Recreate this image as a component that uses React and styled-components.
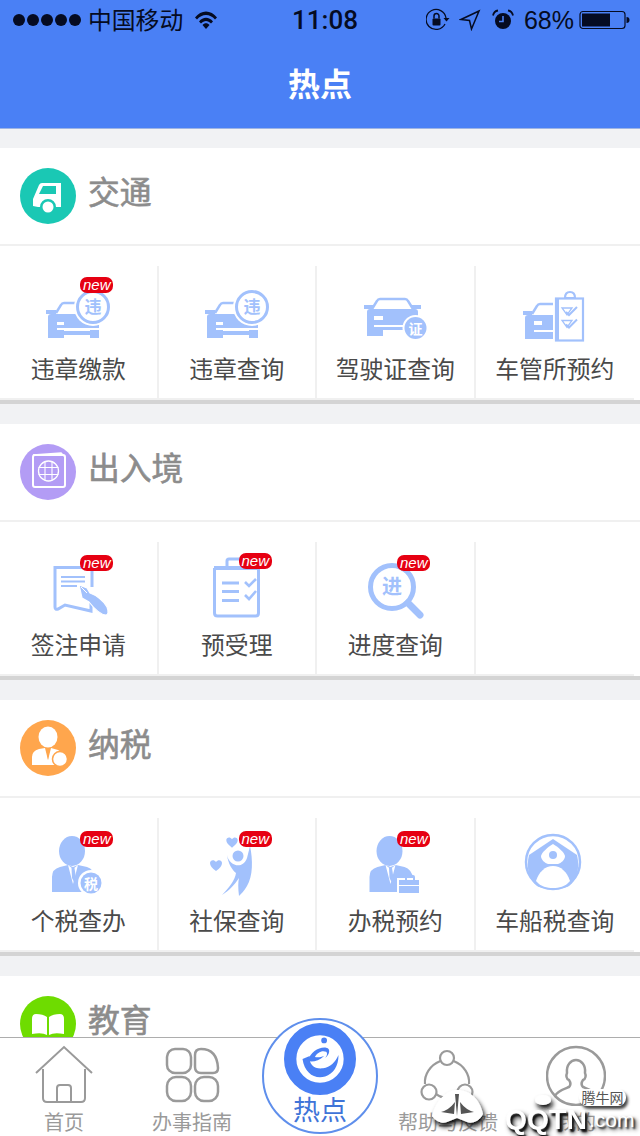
import React from "react";
import styled, { createGlobalStyle } from "styled-components";

const BLUE = "#a2c1fc";
const CJK = `"Noto Sans CJK SC", "Noto Sans", sans-serif`;

const Global = createGlobalStyle`
  html, body { margin: 0; padding: 0; background: #f1f2f4; }
  * { box-sizing: border-box; }
`;

const Page = styled.div`
  width: 640px; height: 1136px; display: flex; flex-direction: column;
  overflow: hidden; position: relative; background: #f1f2f4; font-family: ${CJK};
`;
const Header = styled.header`
  height: 129px; flex: none; background: #4a80f5; border-bottom: 1px solid #9db4e4;
`;
const StatusBar = styled.div`
  height: 40px; display: flex; align-items: center; justify-content: space-between;
  padding: 0 10px 0 13px; color: #050b22; position: relative;
`;
const StatusGroup = styled.div`
  display: flex; align-items: center;
`;
const Dots = styled.div`
  display: flex; gap: 2px; margin-right: 7px;
`;
const Dot = styled.span`
  width: 12px; height: 12px; border-radius: 50%; background: #050b22;
`;
const Carrier = styled.span`
  font-size: 23.8px; line-height: 38px; margin-right: 11px; padding-bottom: 2px;
`;
const Clock = styled.span`
  position: absolute; left: 292px; top: 0;
  font: 500 26px/40px Roboto, "Liberation Sans", sans-serif;
`;
const StatusIcon = styled.svg`
  display: block; flex: none; margin-left: ${(p) => p.$gap || 0}px;
`;
const Percent = styled.span`
  font: 400 25px/40px "Liberation Sans", sans-serif; margin: 0 5px 0 10px;
`;
const TitleBar = styled.h1`
  margin: 0; height: 88px; display: flex; align-items: center; justify-content: center;
  color: #fff; font-size: 32px; font-weight: 700; padding-bottom: 4px;
`;
const Content = styled.main`
  flex: 1; min-height: 0; overflow: hidden; display: flex; flex-direction: column;
  gap: 20px; padding-top: 19px;
`;
const Section = styled.section`
  flex: none; background: #fff; border-bottom: 4px solid #d4d4d4;
`;
const SectionHead = styled.div`
  height: 98px; display: flex; align-items: center; gap: 12px;
  padding: 0 20px; border-bottom: 2px solid #f0f0f0;
`;
const Badge = styled.div`
  width: 56px; height: 56px; border-radius: 50%; background: ${(p) => p.$color};
  flex: none;
  svg { display: block; }
`;
const SectionTitle = styled.h2`
  margin: 0 0 12px; font-size: 31.8px; font-weight: 400; color: #8c8c8c; line-height: 44px;
  -webkit-text-stroke: 0.6px #8c8c8c;
`;
const Grid = styled.div`
  width: 634px; margin-top: 20px; display: grid; grid-template-columns: repeat(4, 158.5px);
  border-bottom: 2px solid #f0f0f0;
`;
const Cell = styled.div`
  height: 132px; border-right: ${(p) => (p.$last ? "none" : "2px solid #f0f0f0")};
  display: flex; flex-direction: column; align-items: center; padding-top: 10px;
`;
const IconWrap = styled.div`
  position: relative; width: 80px; height: 64px; flex: none;
  svg { display: block; overflow: visible; }
`;
const NewTag = styled.span`
  position: absolute; left: 42px; top: ${(p) => p.$top}px; width: 33px; height: 16px;
  border-radius: 7px; background: #e60012; color: #fff; text-align: center;
  font: italic 400 15px/15px "Liberation Sans", sans-serif;
`;
const CellLabel = styled.div`
  margin-top: 11px; font-size: 23.8px; line-height: 34px; color: #4a4a4a; white-space: nowrap;
  font-weight: 400;
`;
const TabBar = styled.nav`
  flex: none; height: 99px; background: #fff; border-top: 1px solid #adadad;
  display: grid; grid-template-columns: repeat(5, 128px); position: relative;
`;
const Tab = styled.div`
  display: flex; flex-direction: column; align-items: center; padding-top: 6px;
  svg { display: block; flex: none; }
`;
const TabLabel = styled.span`
  font-size: 20px; line-height: 26px; color: #9a9a9a; margin-top: 3px; white-space: nowrap;
`;
const HotCircle = styled.div`
  position: absolute; left: 262px; top: -20px; width: 116px; height: 116px; border-radius: 50%;
  background: #fff; border: 2px solid #5f8fec; display: flex; flex-direction: column;
  align-items: center; padding-top: 3px;
  svg { display: block; flex: none; }
`;
const HotLabel = styled.span`
  font-size: 27px; line-height: 34px; color: #3f74d8; margin-top: -3px;
`;
const Watermark = styled.div`
  position: absolute; left: 428px; top: 48px; width: 212px; height: 51px;
  svg { position: absolute; left: 0; top: 0; overflow: visible; }
`;
const WmBrand = styled.span`
  position: absolute; left: 77px; top: 20px; color: #fff;
  font: 700 27px/28px "Liberation Sans", sans-serif; transform: scaleX(1.05); transform-origin: left;
  text-shadow: 2px 3px 2px #111, 3px 4px 5px #333;
`;
const WmCom = styled.span`
  position: absolute; left: 161px; top: 21px; color: #fff;
  font: 400 21px/26px "Liberation Sans", sans-serif; text-shadow: 2px 2px 2px #222, 3px 3px 4px #444;
`;
const WmPill = styled.span`
  position: absolute; left: 151px; top: 3px; width: 47px; height: 17px; border-radius: 8px;
  background: #fff; color: #555; font-size: 14px; line-height: 17px; text-align: center;
  box-shadow: 2px 3px 3px #444;
`;

const CarHalf = () => (
  <g>
    <rect x="8" y="34" width="10" height="4" fill={BLUE} />
    <path d="M18 37l5-8q1-2 3-2h20" fill="#fff" stroke={BLUE} strokeWidth="2.5" />
    <path d="M10 41q0-3 3-3h48v14H26v3h26v-1h9v8h-9v-3H26v3H10z" fill={BLUE} />
    <rect x="19" y="46" width="7" height="3" fill="#fff" />
    <rect x="19" y="52" width="33" height="2" fill="#fff" />
  </g>
);
const TextIn = ({ x, y, size, fill = BLUE, weight = 500, children }) => (
  <text x={x} y={y} fontSize={size} fontWeight={weight} textAnchor="middle" fill={fill} fontFamily={CJK}>
    {children}
  </text>
);
const Svg = ({ children }) => <svg width="80" height="64" viewBox="0 0 80 64">{children}</svg>;

const IconViolation = () => (
  <Svg>
    <CarHalf />
    <circle cx="55" cy="31" r="19" fill="#fff" />
    <circle cx="55" cy="31" r="15.5" fill="#fff" stroke={BLUE} strokeWidth="3" />
    <TextIn x="55" y="37" size="17" weight="700">违</TextIn>
  </Svg>
);
const IconLicense = () => (
  <Svg>
    <rect x="9" y="29" width="10" height="4" fill={BLUE} />
    <rect x="56" y="29" width="10" height="4" fill={BLUE} />
    <path d="M17 33l5-8q1-2 3-2h25q2 0 3 2l5 8" fill="#fff" stroke={BLUE} strokeWidth="2.5" />
    <path d="M12 36q0-3 3-3h45q3 0 3 3v24h-9v-6H28v6H12z" fill={BLUE} />
    <rect x="19" y="40" width="9" height="4" fill="#fff" />
    <rect x="19" y="49" width="38" height="2" fill="#fff" />
    <circle cx="60.5" cy="52" r="13" fill="#fff" />
    <circle cx="60.5" cy="52" r="11" fill={BLUE} />
    <TextIn x="60.5" y="57.5" size="14" fill="#fff" weight="700">证</TextIn>
  </Svg>
);
const IconDmv = () => (
  <Svg>
    <rect x="8" y="35" width="9" height="4" fill={BLUE} />
    <path d="M17 38l5-8q1-2 3-2h13" fill="#fff" stroke={BLUE} strokeWidth="2.5" />
    <path d="M10 42q0-3 3-3h25v24H10z" fill={BLUE} />
    <rect x="19" y="45" width="8" height="4" fill="#fff" />
    <rect x="19" y="54" width="19" height="2" fill="#fff" />
    <path d="M50 22q0-6 5-6t5 6z" fill="#fff" stroke={BLUE} strokeWidth="2.2" />
    <rect x="41" y="22.5" width="27" height="42" fill="#fff" stroke={BLUE} strokeWidth="2.2" />
    <rect x="40" y="22" width="4" height="43" fill={BLUE} />
    <path d="M47 32h10l-5 7z" fill="none" stroke={BLUE} strokeWidth="1.3" />
    <path d="M47 44.500h10l-5 7z" fill="none" stroke={BLUE} strokeWidth="1.3" />
    <path d="M51 36l3 3 8-8M51 48.500l3 3 8-8" fill="none" stroke={BLUE} strokeWidth="2" />
  </Svg>
);
const IconVisa = () => (
  <Svg>
    <path d="M54 35V15.500H17V55q0 3 3 2l7-4 26 6v-8" fill="none" stroke={BLUE} strokeWidth="3" />
    <path d="M23 25h24M23 29.500h24M23 34h16" stroke={BLUE} strokeWidth="2" />
    <path d="M41 33l8 3 3 5c6 2 14 8 17 14 2 5 1 8-1 8-6 0-13-8-17-13l-7-4z" fill={BLUE} stroke="#fff" strokeWidth="1.200" />
    <path d="M43 35l6 6" stroke="#fff" strokeWidth="1" />
  </Svg>
);
const IconAccept = () => (
  <Svg>
    <path d="M30 15v-6q0-2 2-2h16" fill="none" stroke={BLUE} strokeWidth="3" />
    <rect x="17" y="14" width="44" height="4" fill={BLUE} />
    <path d="M17.500 16v45q0 3 3 3h38q3 0 3-3V16" fill="none" stroke={BLUE} strokeWidth="3" />
    <path d="M25 31h17M25 39.500h17M25 48.500h17" stroke={BLUE} strokeWidth="3" />
    <path d="M48 30l4 4 7-7M48 43l4 4 7-8" fill="none" stroke={BLUE} strokeWidth="2.600" />
  </Svg>
);
const IconSearch = () => (
  <Svg>
    <circle cx="37" cy="35" r="21.500" fill="none" stroke={BLUE} strokeWidth="5" />
    <path d="M53 51l12 12" stroke={BLUE} strokeWidth="7" strokeLinecap="round" />
    <TextIn x="37" y="42" size="20" weight="700">进</TextIn>
  </Svg>
);
const Person = ({ children }) => (
  <>
    <ellipse cx="34" cy="23" rx="13" ry="15" fill={BLUE} />
    <path d="M14 64V49q0-8 8-10l8-2 5 2 5-2 9 2q7 2 9 12v13z" fill={BLUE} />
    <path d="M30 37l5 19 5-19-5 4z" fill="#fff" />
    <path d="M33.500 40h3l1.500 10-2 4-2-4z" fill={BLUE} />
    {children}
  </>
);
const IconTax = () => (
  <Svg>
    <Person>
      <circle cx="53" cy="55" r="13" fill="#fff" />
      <circle cx="53" cy="55" r="10.500" fill={BLUE} />
      <TextIn x="53" y="60.500" size="14" fill="#fff" weight="700">税</TextIn>
    </Person>
  </Svg>
);
const Heart = ({ x, y, s = 1 }) => (
  <path
    transform={`translate(${x} ${y}) scale(${s})`}
    d="M0 6C-4 3-6 1-6-2-6-5-2-6 0-3 2-6 6-5 6-2 6 1 4 3 0 6z"
    fill={BLUE}
  />
);
const IconSocial = () => (
  <Svg>
    <Heart x={35} y={14} s={0.95} />
    <Heart x={19} y={37} s={1} />
    <circle cx="41" cy="28" r="5.500" fill={BLUE} />
    <path d="M30 27C32 38 46 42 50 30L53 18C56 32 56 48 50 58 47 63 44 66 42 68 41 60 41 54 42 50 38 56 32 63 25 67 32 60 38 52 39 45 35 42 31 35 30 27z" fill={BLUE} />
  </Svg>
);
const IconAppoint = () => (
  <Svg>
    <g transform="translate(0.500 0)">
      <Person />
    </g>
    <rect x="42" y="50" width="24" height="17" fill="#fff" />
    <path d="M51 52v-3q0-1 1-1h6q1 0 1 1v3" fill="none" stroke={BLUE} strokeWidth="2" />
    <rect x="44" y="52" width="20" height="5" fill={BLUE} />
    <rect x="44" y="58" width="20" height="7" fill={BLUE} />
  </Svg>
);
const IconVessel = () => (
  <Svg>
    <circle cx="38" cy="34" r="27" fill="#fff" stroke={BLUE} strokeWidth="2.500" />
    <path d="M38 11L14 27C11 40 14 52 22 58 28 62 48 62 54 58 62 52 65 40 62 27z" fill={BLUE} />
    <path d="M38 16C33 19 27 24 26 28 26 32 30 35 33 36H43C46 35 50 32 50 28 49 24 43 19 38 16z" fill="#fff" />
    <circle cx="38" cy="27" r="4" fill={BLUE} />
    <path d="M21 53C24 44 30 38 38 38 46 38 52 44 55 53 50 59 44 60 38 60 32 60 26 59 21 53z" fill="#fff" />
  </Svg>
);

const BadgeSvg = ({ children }) => <svg width="56" height="56" viewBox="0 0 56 56">{children}</svg>;
const TruckBadge = () => (
  <BadgeSvg>
    <path d="M13 38V31l6-14q1-2 3-2h19v24h-5a8 8 0 0 0-16 0h-2z" fill="#fff" />
    <path d="M19 26l4-8h13v8z" fill="#1ac8b4" />
    <circle cx="28" cy="39" r="5.500" fill="#fff" />
  </BadgeSvg>
);
const PassportBadge = () => (
  <BadgeSvg>
    <path d="M13 11l28-2 3 3" fill="none" stroke="#fff" strokeWidth="1.500" />
    <rect x="13" y="11" width="32" height="32" rx="2" fill="none" stroke="#fff" strokeWidth="2" />
    <circle cx="28.500" cy="27" r="10" fill="none" stroke="#fff" strokeWidth="1.300" />
    <path d="M18.500 23.500h20M18.500 30.500h20M25 17.500v19M32 17.500v19" stroke="#fff" strokeWidth="1.100" />
  </BadgeSvg>
);
const TaxBadge = () => (
  <BadgeSvg>
    <ellipse cx="28" cy="17" rx="9.500" ry="10.500" fill="#fff" />
    <path d="M12 45v-8q0-6 7-8l6-1 3 12 3-12 7 2q5 2 7 10v5z" fill="#fff" />
    <path d="M26.500 28h3l-1.500 12z" fill="#ffa64d" />
    <circle cx="40" cy="39" r="7.500" fill="#fff" stroke="#ffa64d" strokeWidth="1.500" />
  </BadgeSvg>
);
const BookBadge = () => (
  <BadgeSvg>
    <path d="M12 23q0-5 4-5 7 0 11 3v18q-5-3-15-1zM44 23q0-5-4-5-7 0-11 3v18q5-3 15-1z" fill="#fff" />
  </BadgeSvg>
);

const Stroke = "#9a9a9a";
const HomeIcon = () => (
  <svg width="60" height="62" viewBox="0 0 60 62">
    <path d="M2 29L30 3l28 26M9 25v29q0 4 4 4h34q4 0 4-4V25M23 58V44q0-3 3-3h8q3 0 3 3v14" fill="none" stroke={Stroke} strokeWidth="2" />
  </svg>
);
const GridIcon = () => (
  <svg width="60" height="62" viewBox="0 0 60 62">
    <g fill="none" stroke={Stroke} strokeWidth="2.500">
      <rect x="5" y="5" width="24" height="24" rx="8" />
      <path d="M33 11q0-6 6-6 16 0 17 19 0 5-5 5H39q-6 0-6-6z" />
      <rect x="5" y="33" width="24" height="24" rx="9" />
      <rect x="33" y="33" width="23" height="24" rx="9" />
    </g>
  </svg>
);
const HelpIcon = () => (
  <svg width="60" height="62" viewBox="0 0 60 62">
    <g fill="none" stroke={Stroke} strokeWidth="2.200">
      <circle cx="29" cy="14" r="7" />
      <circle cx="11" cy="48" r="7.500" />
      <circle cx="47" cy="48" r="7.500" />
      <path d="M22.500 17C12 21 6 31 7 40M35.500 17C46 21 52 31 51 40M18 50q11 8 22 0" />
    </g>
  </svg>
);
const UserIcon = () => (
  <svg width="60" height="62" viewBox="0 0 60 62">
    <g fill="none" stroke={Stroke} strokeWidth="2.500">
      <circle cx="30" cy="32" r="29" />
      <path d="M9 52c2-5 9-7 14-9 2-2 2-4 0-7-3-1-3-5-2-7-1-8 4-13 9-13s10 5 9 13c1 2 1 6-2 7-2 3-2 5 0 7 5 2 12 4 14 9" />
    </g>
  </svg>
);
const HotLogo = () => (
  <svg width="72" height="72" viewBox="0 0 70 70">
    <circle cx="35" cy="35" r="29" fill="#fff" stroke="#4a80f5" strokeWidth="12" />
    <circle cx="39" cy="17" r="2.800" fill="#4a80f5" />
    <path d="M18 35c2 14 12 20 22 17 8-3 13-10 13-21-3 7-8 12-15 13-8 1-14-3-13-12z" fill="#4a80f5" />
    <path d="M23 37c3-9 11-14 18-13 5 1 3 7-1 10 1-1 3-4 1-6-4-2-9 1-11 5 3 1 6 0 9-1-5 5-11 6-16 5z" fill="#4a80f5" />
  </svg>
);

const Tile = ({ label, icon, tag, last }) => (
  <Cell $last={last}>
    <IconWrap>
      {icon}
      {tag !== undefined && <NewTag $top={tag}>new</NewTag>}
    </IconWrap>
    {label && <CellLabel>{label}</CellLabel>}
  </Cell>
);

const sections = [
  {
    title: "交通", color: "#1ac8b4", badge: <TruckBadge />,
    items: [
      { label: "违章缴款", icon: <IconViolation />, tag: 1 },
      { label: "违章查询", icon: <IconViolation /> },
      { label: "驾驶证查询", icon: <IconLicense /> },
      { label: "车管所预约", icon: <IconDmv /> },
    ],
  },
  {
    title: "出入境", color: "#b39cf5", badge: <PassportBadge />,
    items: [
      { label: "签注申请", icon: <IconVisa />, tag: 3 },
      { label: "预受理", icon: <IconAccept />, tag: 1 },
      { label: "进度查询", icon: <IconSearch />, tag: 3 },
      { label: "", icon: null },
    ],
  },
  {
    title: "纳税", color: "#ffa64d", badge: <TaxBadge />,
    items: [
      { label: "个税查办", icon: <IconTax />, tag: 3 },
      { label: "社保查询", icon: <IconSocial />, tag: 3 },
      { label: "办税预约", icon: <IconAppoint />, tag: 3 },
      { label: "车船税查询", icon: <IconVessel /> },
    ],
  },
  { title: "教育", color: "#6edc00", badge: <BookBadge />, items: [] },
];

export default function App() {
  return (
    <Page>
      <Global />
      <Header>
        <StatusBar>
          <StatusGroup>
            <Dots>{[0, 1, 2, 3, 4].map((i) => <Dot key={i} />)}</Dots>
            <Carrier>中国移动</Carrier>
            <StatusIcon width="24" height="20" viewBox="0 0 24 20">
              <path d="M1 7.500C7-.5 17-.5 23 7.500l-2 2C16 3.500 8 3.500 3 9.500zM5 11.500c4-5 10-5 14 0l-2 2c-3-3.500-7-3.500-10 0zM8.500 15c2-2.500 5-2.500 7 0L12 19z" fill="#050b22" />
            </StatusIcon>
          </StatusGroup>
          <Clock>11:08</Clock>
          <StatusGroup>
            <StatusIcon width="24" height="24" viewBox="0 0 24 24">
              <path d="M19 16a10 10 0 1 1 1-6" fill="none" stroke="#050b22" strokeWidth="1.300" />
              <path d="M17.500 10h6l-3 3.500z" fill="#050b22" />
              <rect x="6.500" y="10.500" width="8" height="7" rx="1" fill="#050b22" />
              <path d="M8 10.500V8a2.500 2.500 0 0 1 5 0v2.500" fill="none" stroke="#050b22" strokeWidth="1.500" />
            </StatusIcon>
            <StatusIcon $gap={9} width="22" height="22" viewBox="0 0 22 22">
              <path d="M20 2L2 10.500l8.500 1L12.500 20z" fill="none" stroke="#050b22" strokeWidth="1.500" />
            </StatusIcon>
            <StatusIcon $gap={11} width="22" height="22" viewBox="0 0 22 22">
              <circle cx="11" cy="12" r="8" fill="#050b22" />
              <path d="M11 7v5.500H7" fill="none" stroke="#4a80f5" strokeWidth="1.600" />
              <path d="M1 6.500Q2 2 6 1.500M21 6.500Q20 2 16 1.500" fill="none" stroke="#050b22" strokeWidth="1.800" />
            </StatusIcon>
            <Percent>68%</Percent>
            <StatusIcon width="51" height="20" viewBox="0 0 51 20">
              <rect x="1" y="1.500" width="45" height="17" rx="3" fill="none" stroke="#050b22" strokeWidth="1.200" />
              <rect x="3" y="3.500" width="28" height="13" fill="#050b22" />
              <path d="M47.500 7q3 0 3 3t-3 3z" fill="#050b22" />
            </StatusIcon>
          </StatusGroup>
        </StatusBar>
        <TitleBar>热点</TitleBar>
      </Header>
      <Content>
        {sections.map((s) => (
          <Section key={s.title}>
            <SectionHead>
              <Badge $color={s.color}>{s.badge}</Badge>
              <SectionTitle>{s.title}</SectionTitle>
            </SectionHead>
            <Grid>
              {s.items.map((it, i) => (
                <Tile key={i} {...it} last={i === 3} />
              ))}
            </Grid>
          </Section>
        ))}
      </Content>
      <TabBar>
        <Tab><HomeIcon /><TabLabel>首页</TabLabel></Tab>
        <Tab><GridIcon /><TabLabel>办事指南</TabLabel></Tab>
        <Tab />
        <Tab><HelpIcon /><TabLabel>帮助与反馈</TabLabel></Tab>
        <Tab><UserIcon /><TabLabel>我的</TabLabel></Tab>
        <HotCircle>
          <HotLogo />
          <HotLabel>热点</HotLabel>
        </HotCircle>
        <Watermark>
          <svg width="130" height="51" viewBox="0 0 130 51">
            <defs>
              <filter id="wm" x="-30%" y="-30%" width="170%" height="170%">
                <feDropShadow dx="2" dy="4" stdDeviation="2.500" floodColor="#111" />
              </filter>
            </defs>
            <g filter="url(#wm)">
              <path d="M4 30C8 14 18 5 28 4c12-1 24 8 27 24-4 8-12 10-16 8l-10-4-10 4C15 38 8 36 4 30z" fill="#fff" />
              <ellipse cx="115" cy="14" rx="8" ry="5" fill="#fff" />
            </g>
            <path d="M27 8l2 22 2-22zM13 26q8-2 14-10l-1 12zM46 26q-8-2-14-10l1 12z" fill="#555" />
          </svg>
          <WmBrand>QQTN</WmBrand>
          <WmCom>.com</WmCom>
          <WmPill>腾牛网</WmPill>
        </Watermark>
      </TabBar>
    </Page>
  );
}
